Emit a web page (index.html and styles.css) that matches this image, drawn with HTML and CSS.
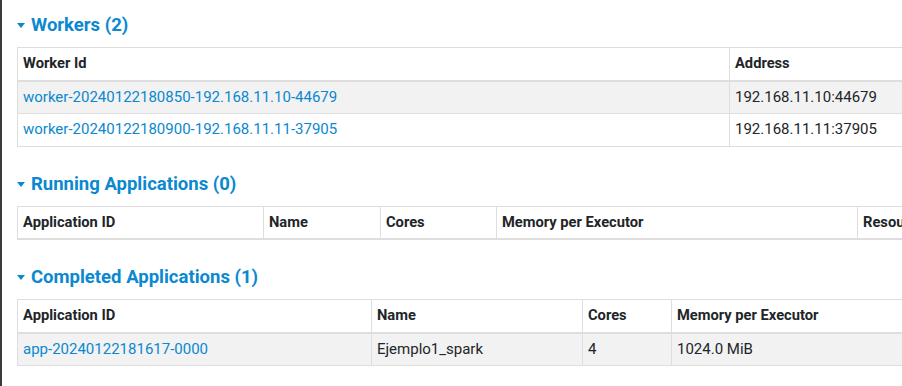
FILE: index.html
```html
<!DOCTYPE html>
<html>
<head>
<meta charset="utf-8">
<link rel="stylesheet" href="styles.css">
</head>
<body>
<div class="page">
  <h4 class="section-title first"><span class="arrow"></span>Workers (2)</h4>
  <table class="tbl workers">
    <colgroup><col class="c712"><col class="c300"><col class="c120"><col class="c120"><col class="c200"></colgroup>
    <thead><tr><th>Worker Id</th><th>Address</th><th>State</th><th>Cores</th><th>Memory</th></tr></thead>
    <tbody>
      <tr><td><a href="#">worker-20240122180850-192.168.11.10-44679</a></td><td>192.168.11.10:44679</td><td>ALIVE</td><td>4 (0 Used)</td><td>6.6 GiB (0.0 B Used)</td></tr>
      <tr><td><a href="#">worker-20240122180900-192.168.11.11-37905</a></td><td>192.168.11.11:37905</td><td>ALIVE</td><td>4 (0 Used)</td><td>6.6 GiB (0.0 B Used)</td></tr>
    </tbody>
  </table>

  <h4 class="section-title"><span class="arrow"></span>Running Applications (0)</h4>
  <table class="tbl running">
    <colgroup><col class="c246"><col class="c117"><col class="c116"><col class="c361"><col class="c200"><col class="c160"></colgroup>
    <thead><tr><th>Application ID</th><th>Name</th><th>Cores</th><th>Memory per Executor</th><th>Resources Per Executor</th><th>Submitted Time</th></tr></thead>
    <tbody></tbody>
  </table>

  <h4 class="section-title"><span class="arrow"></span>Completed Applications (1)</h4>
  <table class="tbl completed">
    <colgroup><col class="c354"><col class="c211"><col class="c89"><col class="c300"><col class="c200"></colgroup>
    <thead><tr><th>Application ID</th><th>Name</th><th>Cores</th><th>Memory per Executor</th><th>Resources Per Executor</th></tr></thead>
    <tbody>
      <tr><td><a href="#">app-20240122181617-0000</a></td><td>Ejemplo1_spark</td><td>4</td><td>1024.0 MiB</td><td></td></tr>
    </tbody>
  </table>
</div>
</body>
</html>
```
FILE: styles.css
```css
html, body {
  margin: 0;
  padding: 0;
  background: #ffffff;
  overflow: hidden;
}
body {
  width: 900px;
  height: 386px;
  border-left: 2px solid #3b3b3b;
  font-family: Roboto, "Liberation Sans", Arial, sans-serif;
  font-size: 15px;
  color: #212529;
}
.page {
  padding-left: 15px;
  width: 2400px;
}
.section-title {
  margin: 26px 0 11px 0;
  font-size: 18.5px;
  line-height: 22px;
  font-weight: 700;
  color: #0a88d0;
  display: flex;
  align-items: center;
}
.section-title.first {
  margin-top: 14px;
}
.arrow {
  width: 0;
  height: 0;
  border-left: 4.5px solid transparent;
  border-right: 4.5px solid transparent;
  border-top: 5px solid #0a88d0;
  margin-right: 6px;
  margin-top: 1px;
}
.tbl {
  border-collapse: collapse;
  table-layout: fixed;
}
.tbl th, .tbl td {
  border: 1px solid #dedede;
  padding: 5.25px 5px;
  line-height: 21px;
  text-align: left;
  white-space: nowrap;
  overflow: hidden;
}
.tbl th {
  font-size: 14.7px;
  font-weight: 700;
  color: #212529;
  border-bottom: 2px solid #dedede;
}
.tbl tbody tr:nth-child(odd) td {
  background: #f2f2f2;
}
.tbl a {
  color: #0a88d0;
  text-decoration: none;
}
.c712 { width: 712px; }
.c300 { width: 300px; }
.c120 { width: 120px; }
.c200 { width: 200px; }
.c160 { width: 160px; }
.c246 { width: 246px; }
.c117 { width: 117px; }
.c116 { width: 116px; }
.c361 { width: 361px; }
.c354 { width: 354px; }
.c211 { width: 211px; }
.c89 { width: 89px; }
```
